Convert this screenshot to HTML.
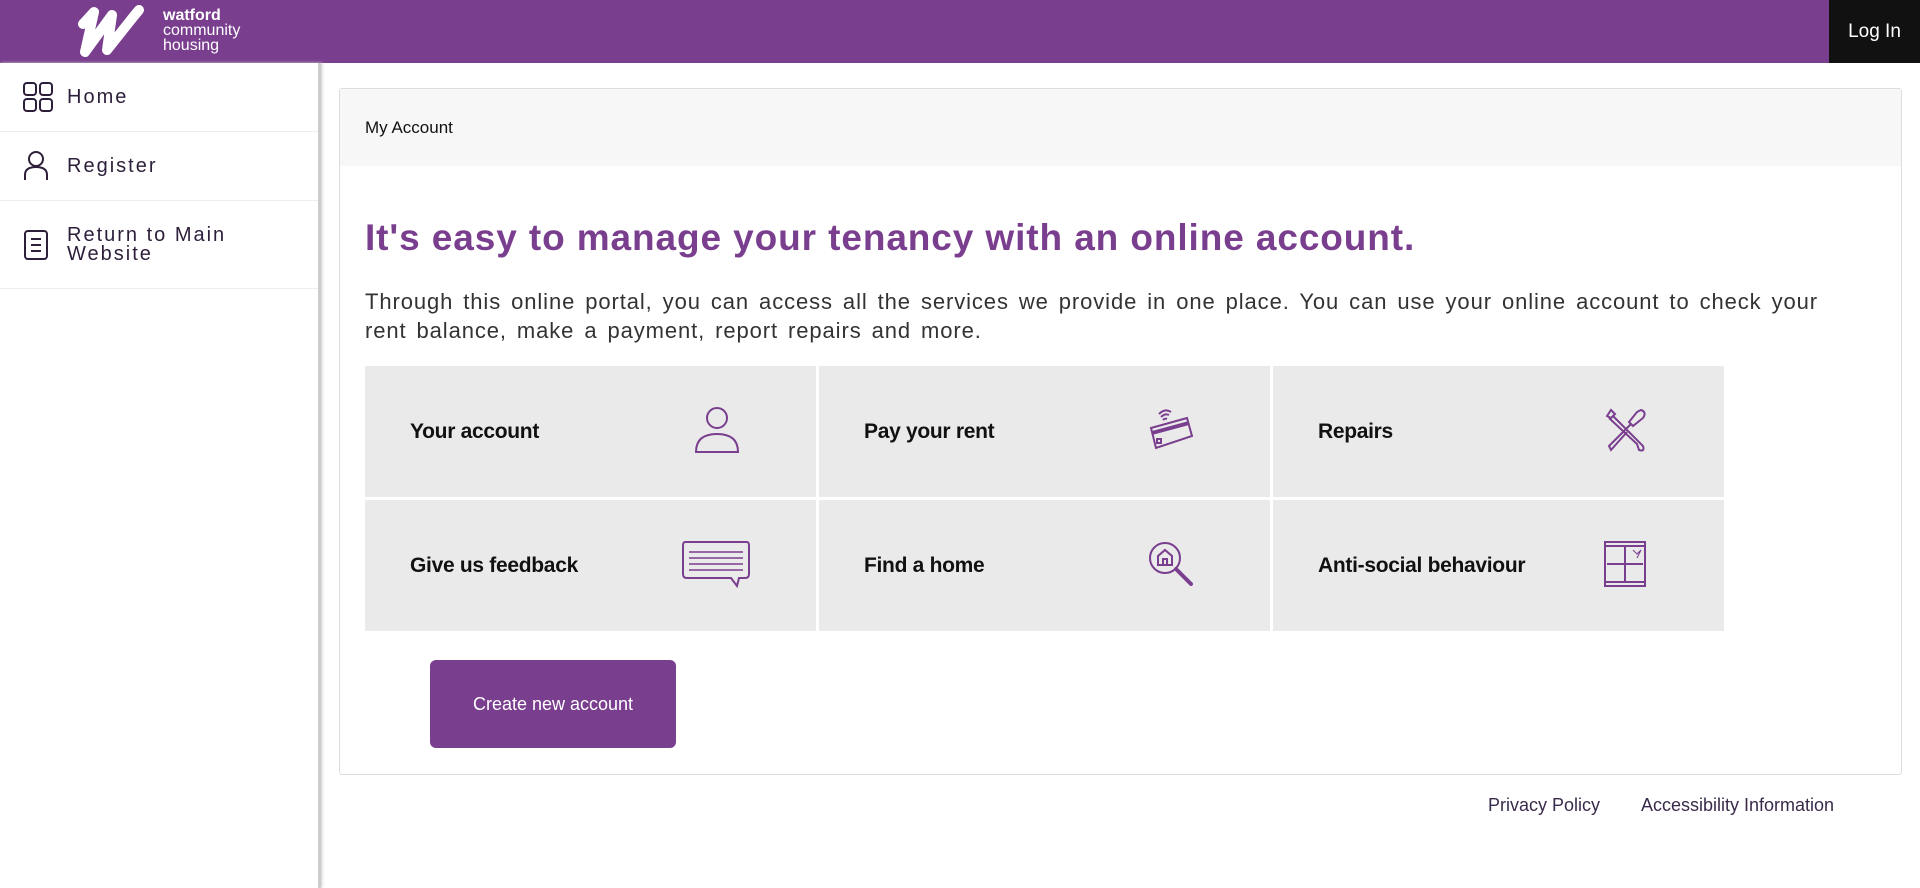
<!DOCTYPE html>
<html><head><meta charset="utf-8"><style>
*{box-sizing:border-box;margin:0;padding:0}
body{width:1920px;height:888px;overflow:hidden;background:#fff;font-family:"Liberation Sans",sans-serif;position:relative}
.hdr{position:absolute;left:0;top:0;width:1920px;height:63px;background:#7a3e8f}
.login{position:absolute;right:0;top:0;width:91px;height:63px;background:#111;color:#fff;font-size:19px;display:flex;align-items:center;justify-content:center}
.logo-t{position:absolute;left:163px;top:8px;color:#fff;font-size:16px;line-height:15px}
.logo-t b{font-weight:bold}
.side{position:absolute;left:0;top:63px;width:321px;height:825px;background:#fff;border-right:3px solid #ccc;box-shadow:1px 0 3px #ccc}
.item{height:69px;border-bottom:1px solid #eee;display:flex;align-items:center;padding-left:67px;position:relative;color:#2d1e3a;font-size:20px;letter-spacing:2px}
.item svg{position:absolute;left:23px}
.card{position:absolute;left:339px;top:88px;width:1563px;height:687px;border:1px solid #ddd;border-radius:3px}
.ch{height:77px;background:#f7f7f7;padding-left:25px;display:flex;align-items:center;font-size:17px;color:#111}
h1{position:absolute;left:25px;top:128px;font-size:37px;color:#7a3e8f;font-weight:bold;letter-spacing:0.9px;white-space:nowrap}
p{position:absolute;left:25px;top:198px;width:1490px;font-size:22px;line-height:29px;color:#333;letter-spacing:0.9px;word-spacing:3px}
.grid{position:absolute;left:25px;top:277px;width:1361px;display:grid;grid-template-columns:451px 451px 451px;grid-gap:3px}
.tile{height:131px;background:#eaeaea;position:relative;display:flex;align-items:center;padding-left:45px;font-size:21px;font-weight:bold;color:#111;letter-spacing:-.3px}
.tile svg{position:absolute;left:328px;top:40px}
.btn{position:absolute;left:90px;top:571px;width:246px;height:88px;background:#7a3e8f;border-radius:6px;color:#fff;font-size:18px;display:flex;align-items:center;justify-content:center}
.foot{position:absolute;top:795px;font-size:18px;color:#3a2a4a}
</style></head><body>
<div class="hdr">
<svg style="position:absolute;left:76px;top:4px" width="72" height="56" viewBox="0 0 72 56"><path d="M7 20 L18 8 L9 48 L36 11 L31 46 L58 12 L63 6" fill="none" stroke="#fff" stroke-width="10" stroke-linecap="round" stroke-linejoin="round"/></svg>
<div class="logo-t"><b>watford</b><br>community<br>housing</div>
<div class="login">Log In</div>
</div>
<div class="side">
<div class="item"><svg width="30" height="30" viewBox="0 0 30 30" fill="none" stroke="#2d1e3a" stroke-width="2"><rect x="1" y="1" width="12" height="12" rx="3"/><rect x="17" y="1" width="12" height="12" rx="3"/><rect x="1" y="17" width="12" height="12" rx="3"/><rect x="17" y="17" width="12" height="12" rx="3"/></svg>Home</div>
<div class="item"><svg width="26" height="30" viewBox="0 0 26 30" fill="none" stroke="#2d1e3a" stroke-width="2"><circle cx="13" cy="8" r="7"/><path d="M2 29 V24 Q2 16 13 16 Q24 16 24 24 V29"/></svg>Register</div>
<div class="item" style="height:88px;line-height:19px">
<svg width="26" height="32" viewBox="0 0 26 32" fill="none" stroke="#2d1e3a" stroke-width="2"><rect x="2" y="2" width="22" height="28" rx="3"/><path d="M8 10h10M8 16h10M8 22h10"/></svg>Return to Main<br>Website</div>
</div>
<div class="card">
<div class="ch">My Account</div>
<h1>It's easy to manage your tenancy with an online account.</h1>
<p>Through this online portal, you can access all the services we provide in one place. You can use your online account to check your rent balance, make a payment, report repairs and more.</p>
<div class="grid">
<div class="tile">Your account<svg width="48" height="48" viewBox="0 0 48 48" fill="none" stroke="#7a3e8f" stroke-width="2"><circle cx="24" cy="12" r="10"/><path d="M3 46 Q3 28 24 28 Q45 28 45 46 Z"/></svg></div>
<div class="tile">Pay your rent<svg width="48" height="48" viewBox="0 0 48 48" fill="none" stroke="#7a3e8f" stroke-width="2"><path d="M4 22 L40 12 L45 30 L9 42 Z"/><path d="M5 27 L42 17" stroke-width="4"/><rect x="10" y="33" width="4" height="4"/><path d="M12 8 Q18 2 24 6M14 11 Q18 7 22 9M16 14 Q18 12 20 13"/></svg></div>
<div class="tile">Repairs<svg width="48" height="48" viewBox="0 0 48 48" fill="none" stroke="#7a3e8f" stroke-width="2"><path d="M6 10 L10 4 L14 8 L10 12 Z M12 10 L42 40 Q44 46 38 44 L36 38 L8 12"/><path d="M40 4 Q46 6 42 12 L32 20 L28 16 L36 6 Z M30 18 L8 40 L10 44 L26 26"/></svg></div>
<div class="tile">Give us feedback<svg width="70" height="48" viewBox="0 0 70 48" fill="none" stroke="#7a3e8f" stroke-width="2" style="left:316px"><path d="M4 2 H66 Q68 2 68 6 V34 Q68 38 64 38 H58 L56 46 L50 38 H6 Q2 38 2 34 V6 Q2 2 4 2 Z"/><path d="M8 12 H62 M8 18 H62 M8 24 H62 M8 30 H62" stroke-width="1.5"/></svg></div>
<div class="tile">Find a home<svg width="48" height="48" viewBox="0 0 48 48" fill="none" stroke="#7a3e8f" stroke-width="2"><circle cx="18" cy="18" r="15"/><path d="M11 25 V16 L18 10 L25 16 V25 Z M16 25 V19 H20 V25"/><path d="M29 29 L44 44" stroke-width="4" stroke-linecap="round"/></svg></div>
<div class="tile">Anti-social behaviour<svg width="48" height="48" viewBox="0 0 48 48" fill="none" stroke="#7a3e8f" stroke-width="2"><rect x="4" y="2" width="40" height="44"/><path d="M4 6 H44 M4 42 H44 M24 6 V42 M6 24 H42"/><path d="M32 10 L36 14 L40 10 L36 18" stroke-width="1"/></svg></div>
</div>
<a class="btn">Create new account</a>
</div>
<div class="foot" style="left:1488px">Privacy Policy</div>
<div class="foot" style="left:1641px">Accessibility Information</div>
</body></html>
